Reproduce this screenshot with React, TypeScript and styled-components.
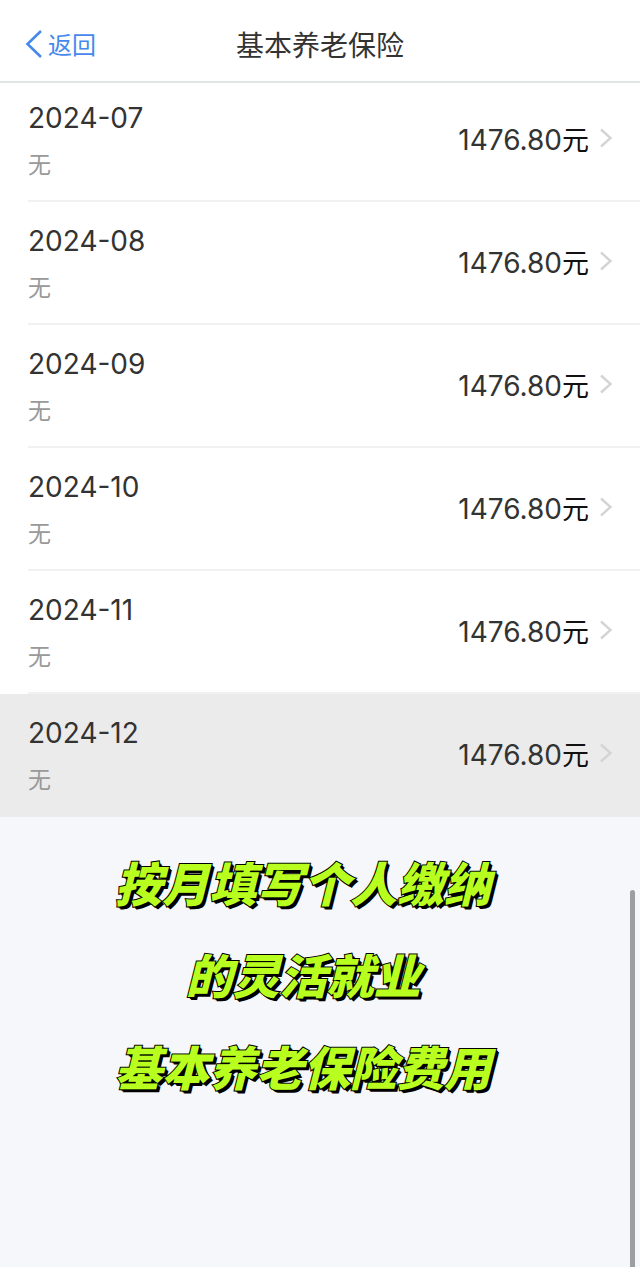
import React from 'react';
import styled, { createGlobalStyle } from 'styled-components';

const GlobalStyle = createGlobalStyle`
  *, *::before, *::after { box-sizing: border-box; }
  body {
    margin: 0;
    background: #f5f7fb;
    font-family: Inter, "Noto Sans CJK SC", sans-serif;
    color: #333;
  }
`;

const Page = styled.div`
  position: relative;
  display: flex;
  flex-direction: column;
  min-height: 100vh;
`;

const Header = styled.header`
  display: grid;
  grid-template-columns: 1fr auto 1fr;
  align-items: center;
  height: 83px;
  padding: 10px 24px 0;
  background: #fff;
  border-bottom: 2px solid #e2e5e6;
`;

const BackButton = styled.button`
  display: flex;
  align-items: center;
  justify-self: start;
  gap: 5px;
  padding: 0;
  border: 0;
  background: none;
  color: #4588ee;
  font: inherit;
  font-size: 24px;
  line-height: 32px;
  cursor: pointer;
`;

const BackIcon = styled.svg`
  margin-bottom: 3px;
`;

const Title = styled.h1`
  margin: 0;
  font-size: 28px;
  font-weight: 400;
  line-height: 36px;
`;

const List = styled.ul`
  margin: 0;
  padding: 0;
  list-style: none;
  background: #fff;
`;

const Item = styled.li<{ $active: boolean }>`
  background: ${({ $active }) => ($active ? '#ebebeb' : '#fff')};
`;

const RowButton = styled.button<{ $first: boolean; $last: boolean }>`
  display: flex;
  align-items: center;
  justify-content: space-between;
  width: calc(100% - 28px);
  height: ${({ $first }) => ($first ? 119 : 123)}px;
  margin-left: 28px;
  padding: ${({ $first }) => ($first ? 0 : 4)}px 27px 0 0;
  border: 0;
  border-bottom: 2px solid ${({ $last }) => ($last ? 'transparent' : '#f1f1f2')};
  background: none;
  color: inherit;
  font: inherit;
  text-align: left;
  cursor: pointer;
`;

const Period = styled.span`
  display: flex;
  flex-direction: column;
  gap: 11px;
`;

const Month = styled.span`
  font-size: 28px;
  line-height: 36px;
`;

const Note = styled.span`
  color: #999;
  font-size: 23px;
  line-height: 36px;
`;

const Amount = styled.span`
  display: flex;
  align-items: center;
  gap: 10px;
  padding-bottom: 3px;
  font-size: 28px;
  line-height: 36px;
`;

const Unit = styled.span`
  color: #111;
  font-size: 27px;
`;

const Chevron = styled.svg`
  margin-bottom: 5px;
`;

const Caption = styled.p`
  margin: 0;
  padding: 19px 34px 48px 0;
  color: #b8ff1f;
  font-family: "Noto Sans CJK SC", sans-serif;
  font-size: 47px;
  font-style: italic;
  font-weight: 900;
  line-height: 92px;
  text-align: center;
  -webkit-text-stroke: 2px #000;
  paint-order: stroke fill;
  text-shadow: 1px 1px 0 #000, 2px 2px 0 #000, 3px 3px 0 #000;
`;

const ScrollThumb = styled.div`
  position: absolute;
  right: 5px;
  bottom: 0;
  width: 5px;
  height: 377px;
  border-radius: 3px 3px 0 0;
  background: #9d9ea0;
`;

const months = ['2024-07', '2024-08', '2024-09', '2024-10', '2024-11', '2024-12'];
const captionLines = ['按月填写个人缴纳', '的灵活就业', '基本养老保险费用'];

export default function App() {
  return (
    <Page>
      <GlobalStyle />
      <Header>
        <BackButton type="button">
          <BackIcon width="19" height="30" viewBox="0 0 19 30" fill="none" stroke="currentColor" strokeWidth="2.6" aria-hidden="true">
            <path d="M17 2 L3.5 15 L17 28" />
          </BackIcon>
          返回
        </BackButton>
        <Title>基本养老保险</Title>
      </Header>
      <List>
        {months.map((month, i) => {
          const last = i === months.length - 1;
          return (
            <Item key={month} $active={last}>
              <RowButton type="button" $first={i === 0} $last={last}>
                <Period>
                  <Month>{month}</Month>
                  <Note>无</Note>
                </Period>
                <Amount>
                  <span>1476.80<Unit>元</Unit></span>
                  <Chevron width="14" height="20" viewBox="0 0 14 20" fill="none" stroke="#d3d5d5" strokeWidth="2.4" aria-hidden="true">
                    <path d="M2 1.5 L11.5 10 L2 18.5" />
                  </Chevron>
                </Amount>
              </RowButton>
            </Item>
          );
        })}
      </List>
      <Caption>
        {captionLines.map((line, i) => (
          <React.Fragment key={line}>
            {i > 0 && <br />}
            {line}
          </React.Fragment>
        ))}
      </Caption>
      <ScrollThumb />
    </Page>
  );
}
